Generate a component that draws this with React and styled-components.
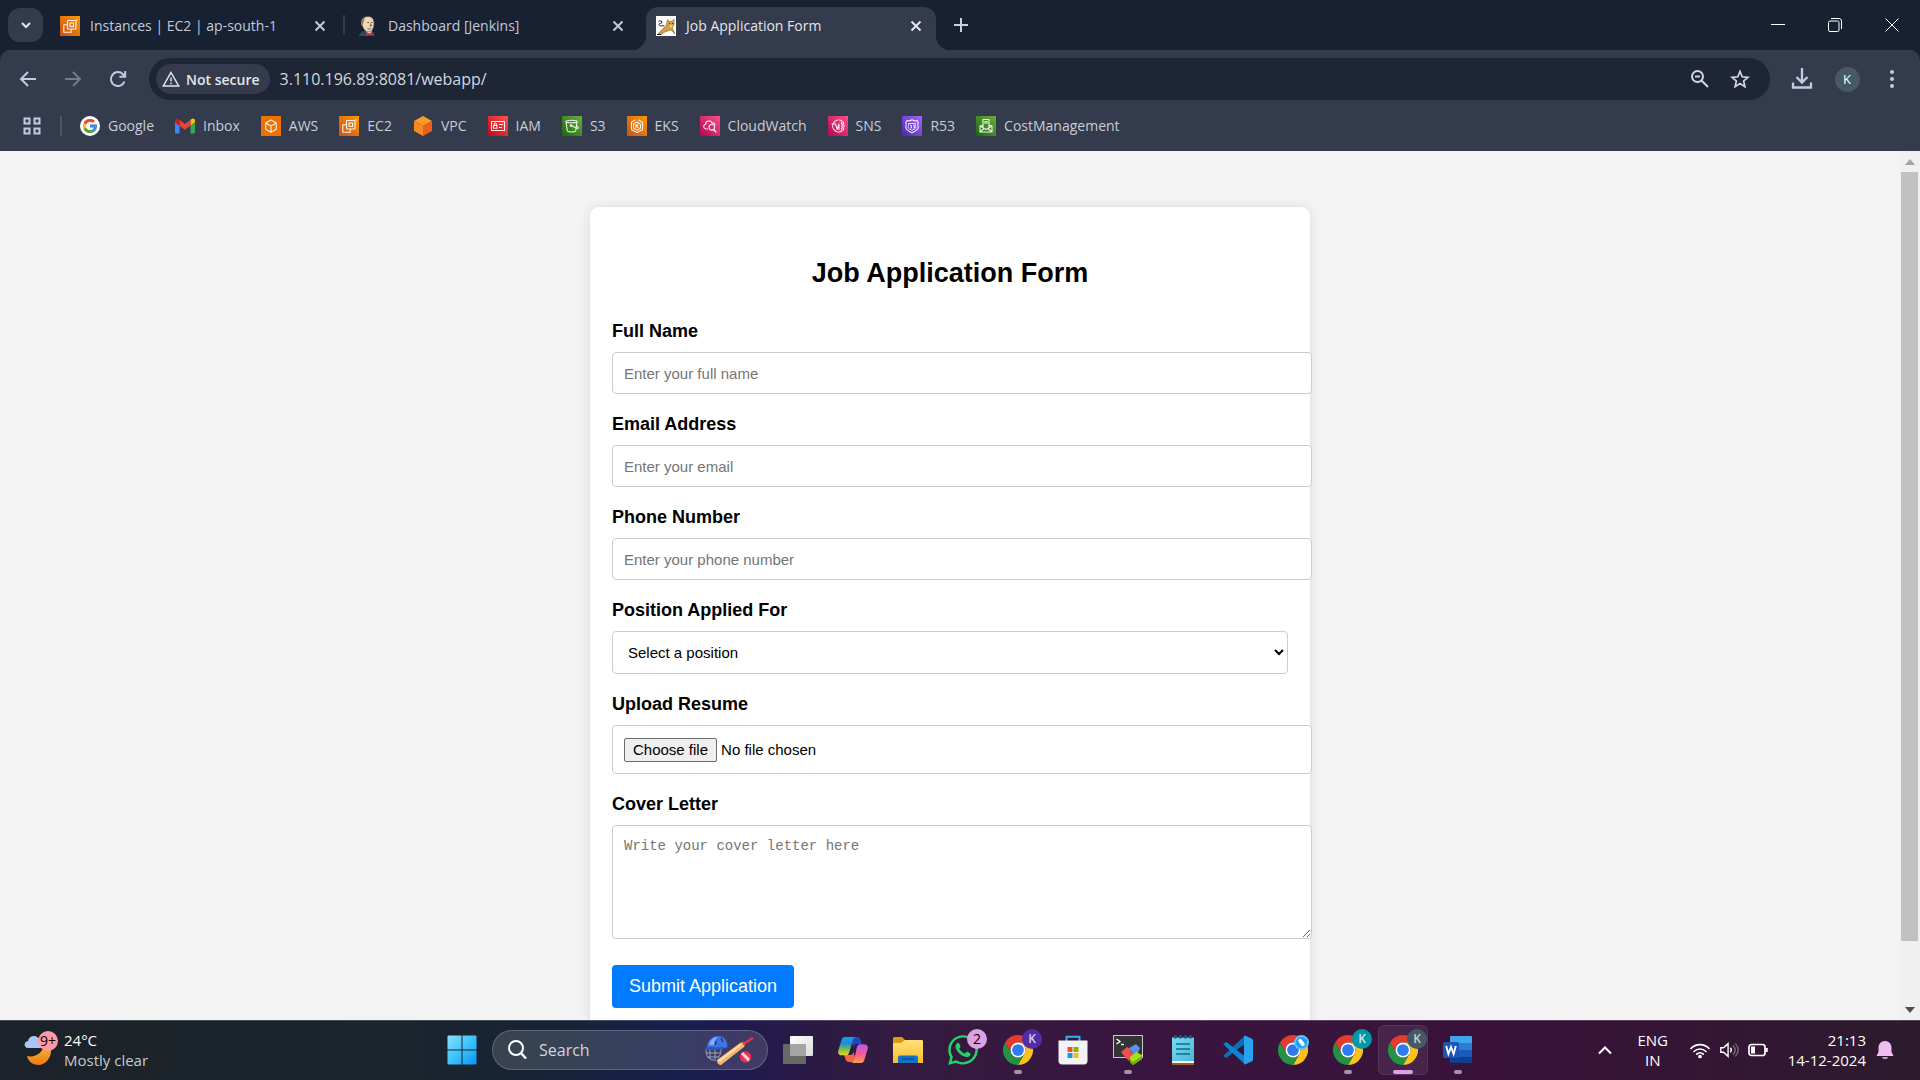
import React from "react";
import styled, { createGlobalStyle } from "styled-components";
import { FaWhatsapp } from "react-icons/fa";

const ui = `"Open Sans", "Noto Sans", sans-serif`;
const arial = `"Liberation Sans", Arial, sans-serif`;
const mono = `"Liberation Mono", monospace`;

const GlobalStyle = createGlobalStyle`
  html, body, #root { height: 100%; }
  body { margin: 0; overflow: hidden; font-family: ${ui}; }
  *, *::before, *::after { box-sizing: border-box; }
  svg { display: block; flex: none; }
`;

const Desktop = styled.div`
  height: 100vh;
  display: flex;
  flex-direction: column;
  background: #333b4c;
`;

const PlainButton = styled.button`
  display: flex;
  align-items: center;
  justify-content: center;
  flex: none;
  padding: 0;
  border: 0;
  background: none;
  color: inherit;
  font: inherit;
`;

/* ---------- tab strip ---------- */

const TabStrip = styled.header`
  display: flex;
  align-items: stretch;
  height: 50px;
  flex: none;
  background: #182131;
  color: #c9d0e4;
`;

const TabSearch = styled(PlainButton)`
  width: 35px;
  height: 34px;
  margin: 8px 7px 0 8px;
  border-radius: 12px;
  background: #333b4c;
  color: #e3e6ee;
`;

const Tabs = styled.nav`
  display: flex;
  padding-top: 7px;
`;

const Tab = styled.div`
  position: relative;
  display: flex;
  align-items: center;
  gap: 10px;
  width: 290px;
  padding: 0 8px 6px 10px;
  border-radius: 12px 12px 0 0;
  background: ${(p) => (p.$active ? "#333b4c" : "transparent")};
  color: ${(p) => (p.$active ? "#e3e6ee" : "#c3c9db")};

  &::before,
  &::after {
    content: "";
    display: ${(p) => (p.$active ? "block" : "none")};
    position: absolute;
    bottom: 0;
    width: 14px;
    height: 14px;
  }
  &::before {
    right: 100%;
    background: radial-gradient(circle at 0 0, transparent 14px, #333b4c 14px);
  }
  &::after {
    left: 100%;
    background: radial-gradient(circle at 100% 0, transparent 14px, #333b4c 14px);
  }
`;

const TabLink = styled.a`
  flex: 1;
  color: inherit;
  text-decoration: none;
  white-space: nowrap;
  font-size: 14px;
  line-height: 20px;
`;

const TabClose = styled(PlainButton)`
  width: 24px;
  height: 24px;
`;

const TabGap = styled.span`
  display: flex;
  justify-content: center;
  width: 8px;
  padding-top: 8px;

  &::after {
    content: "";
    width: 2px;
    height: 20px;
    background: ${(p) => (p.$line ? "#333b4c" : "transparent")};
  }
`;

const NewTab = styled(PlainButton)`
  width: 34px;
  height: 34px;
  margin: 8px auto 0 8px;
`;

const WindowButton = styled(PlainButton)`
  width: 57px;
  color: #ffffff;
`;

/* ---------- toolbar ---------- */

const Toolbar = styled.div`
  flex: none;
  background: #333b4c;
  border-radius: 10px 10px 0 0;
  color: #c3cbe2;
`;

const ToolbarBase = styled.div`
  flex: none;
  background: #182131;
`;

const AddressRow = styled.div`
  display: flex;
  align-items: center;
  padding: 8px 15px 8px 14px;
`;

const NavButton = styled(PlainButton)`
  width: 27px;
  height: 34px;
  margin-right: 18px;
  color: ${(p) => (p.$dim ? "#747b8b" : "#c3cbe2")};
`;

const Omnibox = styled.div`
  display: flex;
  align-items: center;
  flex: 1;
  height: 42px;
  padding: 0 18px 0 7px;
  border-radius: 21px;
  background: #1e2636;
  color: #d3d6df;
`;

const SecureChip = styled(PlainButton)`
  gap: 6px;
  height: 30px;
  padding: 0 10px 0 6px;
  margin-right: 10px;
  border-radius: 15px;
  background: #333b4c;
  color: #e3e5ea;
  font-size: 14px;
  font-weight: 600;
`;

const AddressInput = styled.input`
  flex: 1;
  height: 30px;
  padding: 0;
  border: 0;
  outline: 0;
  background: none;
  color: #d3d6df;
  font-family: ${ui};
  font-size: 16px;
`;

const BoxButton = styled(PlainButton)`
  width: 24px;
  height: 24px;
  margin-left: 16px;
`;

const ToolButton = styled(PlainButton)`
  width: 26px;
  height: 26px;
  margin-left: 19px;
`;

const Avatar = styled.span`
  display: flex;
  align-items: center;
  justify-content: center;
  width: 25px;
  height: 25px;
  border-radius: 50%;
  background: #455a64;
  color: #ffffff;
  font-size: 13px;
  line-height: 20px;
`;

const BookmarkBar = styled.nav`
  display: flex;
  align-items: center;
  height: 43px;
  padding: 0 20px 8px 22px;
  gap: 21px;
`;

const AppsGap = styled.span`
  width: 2px;
  height: 20px;
  margin: 0 -3px;
  background: #4d5667;
`;

const Bookmark = styled.a`
  display: flex;
  align-items: center;
  gap: 8px;
  color: #c9cdd8;
  font-size: 14px;
  line-height: 20px;
  text-decoration: none;
  white-space: nowrap;
`;

/* ---------- page ---------- */

const Viewport = styled.div`
  display: flex;
  flex: 1;
  min-height: 0;
  overflow: hidden;
  background: #f3f3f3;
`;

const Page = styled.main`
  flex: 1;
  min-width: 0;
  padding: 56px 20px 0;
  overflow: hidden;
  color: #000000;
  font-family: ${arial};
`;

const Card = styled.form`
  max-width: 720px;
  margin: 0 auto;
  padding: 22px;
  border-radius: 9px;
  background: #ffffff;
  box-shadow: 0 0 11px rgba(0, 0, 0, 0.1);
`;

const Title = styled.h2`
  margin: 28px 0 32px;
  font-size: 27px;
  line-height: 32px;
  text-align: center;
`;

const Field = styled.div`
  margin-bottom: 20px;
`;

const FieldLabel = styled.label`
  display: block;
  margin-bottom: 10px;
  font-size: 18px;
  font-weight: bold;
  line-height: 21px;
`;

const controlLook = `
  display: block;
  border: 1px solid #cccccc;
  border-radius: 4px;
  background: #ffffff;
  font-family: ${arial};
  font-size: 15px;
`;

const TextInput = styled.input`
  ${controlLook}
  box-sizing: content-box;
  width: 100%;
  height: 18px;
  padding: 11px;
  &::placeholder { color: #757575; }
`;

const SelectInput = styled.select`
  ${controlLook}
  width: 100%;
  height: 43px;
  padding: 11px;
  color: #000000;
`;

const FileBox = styled.div`
  ${controlLook}
  box-sizing: content-box;
  display: flex;
  align-items: center;
  gap: 4px;
  width: 100%;
  height: 25px;
  padding: 11px;
`;

const HiddenFile = styled.input`
  position: absolute;
  width: 1px;
  height: 1px;
  opacity: 0;
`;

const ChooseFile = styled.label`
  padding: 2px 8px;
  border: 1px solid #6b6b6b;
  border-radius: 2px;
  background: #efefef;
  line-height: 18px;
`;

const LetterInput = styled.textarea`
  ${controlLook}
  box-sizing: content-box;
  width: 100%;
  height: 90px;
  padding: 11px;
  font-family: ${mono};
  font-size: 14px;
  line-height: 19px;
  resize: both;
  &::placeholder { color: #757575; }
`;

const Submit = styled.button`
  display: block;
  height: 43px;
  margin-top: 26px;
  padding: 0 17px;
  border: 0;
  border-radius: 4px;
  background: #007bff;
  color: #ffffff;
  font-family: ${arial};
  font-size: 18px;
`;

const Scrollbar = styled.div`
  display: flex;
  flex-direction: column;
  flex: none;
  width: 20px;
  background: #f0f0f0;
`;

const ScrollArrow = styled(PlainButton)`
  height: 21px;
  color: ${(p) => (p.$dim ? "#a3a3a3" : "#505050")};
`;

const ScrollTrack = styled.div`
  flex: 1;
  padding: 0 2px 0 1px;
`;

const ScrollThumb = styled.div`
  height: 93%;
  background: #c1c1c1;
`;

/* ---------- taskbar ---------- */

const Taskbar = styled.footer`
  display: grid;
  grid-template-columns: 1fr auto 1fr;
  flex: none;
  height: 60px;
  padding-bottom: 2px;
  border-top: 1px solid rgba(255, 255, 255, 0.2);
  background: linear-gradient(
    90deg, #1b2229 0%, #1b252b 20%, #172338 29%, #17204b 35%, #1e1a4f 38%,
    #2a1a45 42%, #341b40 47%, #39153f 60%, #38123a 78%, #341634 90%, #2b1b2c 100%
  );
  background-origin: border-box;
  color: #ffffff;
`;

const Weather = styled(PlainButton)`
  justify-self: start;
  gap: 6px;
  padding-left: 22px;
`;

const WeatherIcon = styled.span`
  position: relative;
  width: 36px;
  height: 40px;
`;

const Stack = styled.span`
  display: flex;
  flex-direction: column;
  text-align: ${(p) => p.$align || "left"};
  font-size: 15px;
  line-height: 20px;
`;

const Muted = styled.span`
  color: #c8cacc;
`;

const Badge = styled.span`
  position: absolute;
  top: ${(p) => p.$top || "3px"};
  right: ${(p) => p.$right || "0"};
  display: flex;
  align-items: center;
  justify-content: center;
  width: ${(p) => p.$size || "20px"};
  height: ${(p) => p.$size || "20px"};
  border-radius: 50%;
  background: ${(p) => p.$bg};
  color: ${(p) => p.$fg || "#000000"};
  font-size: ${(p) => (p.$fg ? "12px" : "14px")};
  font-weight: ${(p) => (p.$fg ? 600 : 400)};
  line-height: 20px;
`;

const Apps = styled.nav`
  display: flex;
  align-items: center;
  gap: 5px;
`;

const AppButton = styled(PlainButton)`
  position: relative;
  width: 50px;
  height: 50px;
  border-radius: 6px;
  border: 1px solid ${(p) => (p.$active ? "rgba(255,255,255,0.08)" : "transparent")};
  background: ${(p) => (p.$active ? "rgba(255,255,255,0.08)" : "none")};

  &::after {
    content: "";
    position: absolute;
    bottom: 0;
    width: ${(p) => (p.$active ? "20px" : "8px")};
    height: 4px;
    border-radius: 2px;
    background: ${(p) => (p.$active ? "#dd9fe6" : p.$running ? "#a494a8" : "transparent")};
  }
`;

const SearchBox = styled.label`
  display: flex;
  align-items: center;
  width: 276px;
  height: 40px;
  padding: 0 13px 0 15px;
  gap: 12px;
  border: 1px solid rgba(255, 255, 255, 0.2);
  border-radius: 20px;
  background: rgba(255, 255, 255, 0.14);
`;

const SearchInput = styled.input`
  flex: 1;
  min-width: 0;
  padding: 0;
  border: 0;
  outline: 0;
  background: none;
  font-family: ${ui};
  font-size: 16px;
  color: #ffffff;
  &::placeholder { color: #d3d5db; opacity: 1; }
`;

const Tray = styled.div`
  display: flex;
  align-items: center;
  justify-content: flex-end;
  padding-right: 26px;
`;

const TrayChevron = styled(PlainButton)`
  width: 24px;
  margin-right: 20px;
`;

const Language = styled(PlainButton)`
  width: 32px;
  margin-right: 21px;
`;

const Status = styled(PlainButton)`
  gap: 9px;
  margin-right: 20px;
`;

const Clock = styled(PlainButton)`
  margin-right: 10px;
`;

/* ---------- drawings ---------- */

const Line = ({ size = 20, box = 20, w = 2, children, ...rest }) => (
  <svg width={size} height={size} viewBox={`0 0 ${box} ${box}`} fill="none" stroke="currentColor" strokeWidth={w} {...rest}>
    {children}
  </svg>
);

const CloseIcon = () => (
  <Line size={12} box={12}><path d="M1.5 1.5l9 9M10.5 1.5l-9 9" /></Line>
);

const tiles = {
  orange: ["#c8511b", "#ff9900"],
  flat: ["#ed7100", "#ed7100"],
  red: ["#bd0816", "#ff5252"],
  green: ["#1b660f", "#6cae3e"],
  pink: ["#b0084d", "#ff4f8b"],
  purple: ["#4d27a8", "#a166ff"],
};

const Tile = ({ tone, children }) => {
  const id = React.useId();
  return (
    <svg width="20" height="20" viewBox="0 0 20 20">
      <linearGradient id={id} x1="0" y1="1" x2="1" y2="0">
        <stop offset="0" stopColor={tiles[tone][0]} />
        <stop offset="1" stopColor={tiles[tone][1]} />
      </linearGradient>
      <rect width="20" height="20" fill={`url(#${id})`} />
      <g fill="none" stroke="#ffffff" strokeOpacity="0.9" strokeWidth="1.1" strokeLinejoin="round">{children}</g>
    </svg>
  );
};

const Ec2Icon = () => (
  <Tile tone="orange">
    <rect x="7.500" y="4.500" width="8.500" height="8.500" rx="0.800" />
    <rect x="10" y="7" width="3.500" height="3.500" />
    <path d="M7.500 8.800H3.800v7.400h7.400V13" />
    <path d="M17 3v2" strokeWidth="0.800" />
  </Tile>
);
const AwsIcon = () => (
  <Tile tone="flat"><path d="M10 4l5.200 3v6.200L10 16.200l-5.200-3V7zM4.800 7l5.200 3 5.200-3M10 10v6.200" /></Tile>
);
const VpcIcon = () => (
  <svg width="20" height="20" viewBox="0 0 20 20">
    <path d="M10 0l9 5-9 5-9-5z" fill="#fd9c28" />
    <path d="M1 5l9 5v10l-9-5z" fill="#f68a1f" />
    <path d="M19 5l-9 5v10l9-5z" fill="#e8601c" />
  </svg>
);
const IamIcon = () => (
  <Tile tone="red">
    <path d="M3.500 5.500h13v9h-13zM11 8.500h4M11 11.500h3" />
    <rect x="5.500" y="9.500" width="3.500" height="2.800" /><path d="M6.200 9.500V8a1 1 0 0 1 2.100 0v1.500" />
  </Tile>
);
const S3Icon = () => (
  <Tile tone="green">
    <ellipse cx="9.500" cy="5.500" rx="5.500" ry="1.300" />
    <path d="M4 5.500l1.300 9.500c1 1.400 7.400 1.400 8.400 0L15 5.500M9 9.500l6.500 3c1.500 0 1-1.500-1-2.500" /><circle cx="9" cy="9.500" r="0.700" />
  </Tile>
);
const EksIcon = () => (
  <Tile tone="orange">
    <path d="M8.500 3.800L4.500 6.200v7.600L10 16.500l5.500-2.700V6.200l-4-2.400" />
    <path d="M10 6l3.400 2v4.200L10 14l-3.400-1.800V8zM9 8v4M9 10.500l2.300-2M9.700 10l1.800 2" />
  </Tile>
);
const CloudWatchIcon = () => (
  <Tile tone="pink">
    <path d="M8 13H6c-3-.5-3-4-.5-4.500C5.500 4.500 11 3.500 12 7c2-.5 3 1 3 2.200" />
    <circle cx="11.800" cy="11.300" r="2.800" /><path d="M13.600 13.500l2.600 2.800" strokeWidth="1.500" />
  </Tile>
);
const SnsIcon = () => (
  <Tile tone="pink">
    <path d="M14 5a6 6 0 1 0 0 10M3.500 8h4l1.700 5.500L11 8v6" />
    <circle cx="14.500" cy="7" r="1.200" /><circle cx="15" cy="10" r="1.200" /><circle cx="14.500" cy="13" r="1.200" />
  </Tile>
);
const R53Icon = () => (
  <Tile tone="purple">
    <path d="M5 4.500c1.500.8 3 .5 5-.7 2 1.200 3.500 1.500 5 .7l1.200 2c-1 2-.4 3 .1 4.600 0 3-3.300 4-6.300 5.700-3-1.700-6.300-2.700-6.300-5.700.5-1.600 1.100-2.600.1-4.600z" />
    <path d="M6.500 7.500h7c-.5 2 .3 2.500.3 3.800 0 1.600-2.200 2-3.800 3-1.600-1-3.800-1.400-3.800-3 0-1.300.8-1.800.3-3.800zM8 9.500h1.500V12H8M11 9.500h1.500V12H11" strokeWidth="0.900" />
  </Tile>
);
const CostIcon = () => (
  <Tile tone="green">
    <path d="M7 11V3.500h6V11M9 8V5.500h2V8M4.500 9.500H7M13 9.500h2.500M4 10l6 3.500 6-3.500v6H4zM4 16l4-3.500M16 16l-4-3.500" />
  </Tile>
);
const GoogleIcon = () => (
  <svg width="20" height="20" viewBox="0 0 48 48">
    <circle cx="24" cy="24" r="24" fill="#ffffff" />
    <g transform="translate(3.600 3.600) scale(0.850)">
      <path fill="#fbbc05" d="M43.611 20.083H42V20H24v8h11.303c-1.649 4.657-6.080 8-11.303 8-6.627 0-12-5.373-12-12s5.373-12 12-12c3.059 0 5.842 1.154 7.961 3.039l5.657-5.657C34.046 6.053 29.268 4 24 4 12.955 4 4 12.955 4 24s8.955 20 20 20 20-8.955 20-20c0-1.341-.138-2.650-.389-3.917z" />
      <path fill="#ea4335" d="M6.306 14.691l6.571 4.819C14.655 15.108 18.961 12 24 12c3.059 0 5.842 1.154 7.961 3.039l5.657-5.657C34.046 6.053 29.268 4 24 4 16.318 4 9.656 8.337 6.306 14.691z" />
      <path fill="#34a853" d="M24 44c5.166 0 9.860-1.977 13.409-5.192l-6.190-5.238C29.211 35.091 26.715 36 24 36c-5.202 0-9.619-3.317-11.283-7.946l-6.522 5.025C9.505 39.556 16.227 44 24 44z" />
      <path fill="#4285f4" d="M43.611 20.083H42V20H24v8h11.303c-.792 2.237-2.231 4.166-4.087 5.571l6.193 5.237C36.971 39.205 44 34 44 24c0-1.341-.138-2.650-.389-3.917z" />
    </g>
  </svg>
);
const GmailIcon = () => (
  <svg width="20" height="20" viewBox="52 31 88 88">
    <path fill="#4285f4" d="M58 108h14V74L52 59v43c0 3.320 2.690 6 6 6" />
    <path fill="#34a853" d="M120 108h14c3.320 0 6-2.690 6-6V59l-20 15" />
    <path fill="#fbbc04" d="M120 48v26l20-15v-8c0-7.420-8.470-11.650-14.400-7.200" />
    <path fill="#ea4335" d="M72 74V48l24 18 24-18v26L96 92" />
    <path fill="#c5221f" d="M52 51v8l20 15V48l-5.600-4.200c-5.940-4.450-14.400-.22-14.400 7.200" />
  </svg>
);
const JenkinsIcon = () => (
  <svg width="20" height="20" viewBox="0 0 20 20">
    <path d="M1 20c.5-3 2.500-4.500 5-5l6-.5c3 .5 4.500 2.500 5 5.500z" fill="#2f4a5c" />
    <path d="M7 14l4 5 3-4-1-2z" fill="#f4f4f4" />
    <path d="M4 8C3.500 3 6.200.5 10 .5s6.200 2.600 6 7.200c-.1 4.500-2 8.100-5 8.100C7.200 15.800 4.500 12.500 4 8z" fill="#f0d6b7" stroke="#4b4038" strokeWidth="0.600" />
    <path d="M3.500 10C2 5 4 1 8 .8 5.600 3 6.600 5.500 5.300 7z" fill="#8d7f70" />
    <path d="M9.300 6.500h1.700M13 6.500h1.500M9.500 12.500c1.500.8 2.500.7 3.500 0M12.500 7.500l.8 2.500h-1.500" fill="none" stroke="#3b312b" strokeWidth="0.800" />
    <path d="M8.500 16l3 1.300 3-1.300v4l-3-1.300-3 1.300z" fill="#d33833" />
  </svg>
);
const TomcatIcon = () => (
  <svg width="20" height="20" viewBox="0 0 20 20">
    <rect width="20" height="20" fill="#ffffff" />
    <path d="M11.500 3.500l1.800 1.800h3L18 3.200l.2 5.300-2 3 2.800 6.500-4-4-5 1.500-4.500 2.500H2l3-3.500 5-4.500z" fill="#d7a041" stroke="#6b5426" strokeWidth="0.500" />
    <path d="M13 7.500l1.500.8M17 7.200l-1.300 1M14 10.500h2.500M1 18.500h4M8.500 10C6 9.500 3 10.500 3 8.500s3.500-.5 3-2.500-3-1-3.500-.5" fill="none" stroke="#222" strokeWidth="1" />
    <path d="M13.200 8.500h3.600l-.6 3h-2z" fill="#f2d36b" />
  </svg>
);
const ChromeIcon = () => (
  <svg width="30" height="30" viewBox="0 0 48 48">
    <path fill="#e33b2e" d="M3.215 12A24 24 0 0 1 44.785 12H24A12 12 0 0 0 13.608 30z" />
    <path fill="#fcc21b" d="M44.785 12A24 24 0 0 1 24 48l10.392-18A12 12 0 0 0 24 12z" />
    <path fill="#229342" d="M24 48A24 24 0 0 1 3.215 12l10.393 18a12 12 0 0 0 20.784 0z" />
    <circle cx="24" cy="24" r="12" fill="#ffffff" />
    <circle cx="24" cy="24" r="9.400" fill="#2f7bee" />
  </svg>
);
const WindowsIcon = () => (
  <svg width="30" height="30" viewBox="0 0 30 30">
    <linearGradient id="win" x1="0" y1="0" x2="1" y2="1" >
      <stop offset="0" stopColor="#8be0ff" /><stop offset="0.500" stopColor="#3cc3fb" /><stop offset="1" stopColor="#0a93f7" />
    </linearGradient>
    <path fill="url(#win)" d="M1.500.500h13v14h-14v-13a1 1 0 0 1 1-1zM15.500.500h13a1 1 0 0 1 1 1v13h-14zM.500 15.500h14v14h-13a1 1 0 0 1-1-1zM15.500 15.500h14v13a1 1 0 0 1-1 1h-13z" />
  </svg>
);
const CricketIcon = () => (
  <svg width="50" height="30" viewBox="0 0 50 30">
    <g fill="none" stroke="#9aa3b8" strokeWidth="1"><path d="M2 15c0 6 3 10 8 10M6 14v10M11 14v12M2 18h14M3 22h12M17 14c0 4-1 7-3 9" /></g>
    <path d="M3 12C4 5 8 1 14 1c6 0 9.500 4 9.500 11l-6 2-15 0z" fill="#3f74e6" />
    <path d="M5 10C6 5 9 2 14 2c-3 2-4 5-4 8z" fill="#86acf8" />
    <path d="M0 15l3-3 17 0-2 2.500z" fill="#2b58c8" />
    <path d="M12 6l-.5 4M17 3l2 4" stroke="#1c2f6b" strokeWidth="1.300" />
    <path d="M13 25L36 8c2-1 3-1 4 0s1 2 0 4L17 30c-2 .5-5-3-4-5z" fill="#f5b467" />
    <path d="M14 25L36 9l1.500 1.500L16 27z" fill="#ffd9a0" />
    <path d="M40 8.500l8-5" stroke="#e0344f" strokeWidth="2.600" strokeLinecap="round" />
    <circle cx="41.500" cy="22" r="5.700" fill="#ea2f52" />
    <path d="M37 19l2-2 7 7-2 2.500z" fill="#ffd7de" />
  </svg>
);
const TaskViewIcon = () => (
  <svg width="30" height="30" viewBox="0 0 30 30">
    <linearGradient id="tv" x2="1" y2="1"><stop stopColor="#ffffff" /><stop offset="1" stopColor="#dcdcdc" /></linearGradient>
    <rect x="7" y="1" width="23" height="20" rx="1" fill="url(#tv)" />
    <rect x="0" y="9" width="23" height="20" rx="1" fill="#686868" />
    <path d="M7 9h16v12H7z" fill="#a4a4a4" />
  </svg>
);
const CopilotIcon = () => (
  <svg width="30" height="30" viewBox="0 0 30 30">
    <linearGradient id="cpa" x2="0" y2="1"><stop stopColor="#13a4f0" /><stop offset="0.350" stopColor="#2389d8" /><stop offset="0.650" stopColor="#6cbf4a" /><stop offset="1" stopColor="#f4d126" /></linearGradient>
    <linearGradient id="cpb" x2="0" y2="1"><stop stopColor="#b45be8" /><stop offset="0.500" stopColor="#f3589a" /><stop offset="1" stopColor="#ff9a4d" /></linearGradient>
    <path d="M12 2h7c2 0 3 1 3.600 3L24 9h-5c-2 0-3 1-3.500 3z" fill="#1c49c2" />
    <path d="M18 27h-7c-2 0-3-1-3.600-3L6 20h6c2 0 3-1 3.500-3z" fill="#f2683c" />
    <path d="M7 2h11c-2 .4-2.600 1.500-3 3l-4 13c-.6 1.500-1.500 2.300-3 2.300H4c-3 0-4.500-2-3.600-5l3-10C4.200 3 5 2 7 2z" fill="url(#cpa)" />
    <path d="M23 28H13c2-.4 2.600-1.500 3-3l3-13c.6-1.800 1.500-2.700 3-2.700h4c3 0 4.500 2 3.600 5l-3 10c-.8 2.700-1.600 3.700-3.600 3.700z" fill="url(#cpb)" />
  </svg>
);
const FolderIcon = () => (
  <svg width="30" height="30" viewBox="0 0 30 30">
    <linearGradient id="fd" x2="0" y2="1"><stop stopColor="#ffe07a" /><stop offset="1" stopColor="#f8bd2a" /></linearGradient>
    <path d="M0 3.500C0 2.500.600 2 1.500 2H9l3 3v5H0z" fill="#dc9a10" />
    <path d="M0 8h8l4-3h16.500c1 0 1.500.500 1.500 1.500V28H0z" fill="url(#fd)" />
    <path d="M5 28v-5c0-2 1-2.500 2.500-2.500h15c1.500 0 2.500.500 2.500 2.500v5z" fill="#1273c4" />
    <path d="M9 24h12" stroke="#0b4f93" strokeWidth="1.500" />
  </svg>
);
const StoreIcon = () => (
  <svg width="30" height="30" viewBox="0 0 30 30">
    <path d="M8.500 7V1.800h13V7" fill="none" stroke="#2bb8ee" strokeWidth="2" />
    <path d="M.500 5.500h29V26c0 2-1.500 3.500-3.500 3.500H4C2 29.500.500 28 .500 26z" fill="#f3f3f5" />
    <path fill="#f25022" d="M9.500 12h5v5h-5z" /><path fill="#7fba00" d="M15.500 12h5v5h-5z" />
    <path fill="#00a4ef" d="M9.500 18h5v5h-5z" /><path fill="#ffb900" d="M15.500 18h5v5h-5z" />
  </svg>
);
const TerminalIcon = () => (
  <svg width="30" height="30" viewBox="0 0 30 30">
    <rect x="0.500" y="0.500" width="29" height="22" fill="#343434" stroke="#c9c9c9" />
    <path d="M3.500 4l3.500 2.500L3.500 9M8 9.500h3" fill="none" stroke="#fff" strokeWidth="1.300" />
    <path d="M8 17l6-5 3 2 1 3 3 3-5 6-3-3z" fill="#ef4f4a" />
    <path d="M16 13l7-4 4 4-2 5-5 1z" fill="#5a90f0" />
    <path d="M17 22l6-5 6 3v4l-9 6-3-3z" fill="#a4e012" /><path d="M17 24l3 3 9-6v3l-9 6-3-3z" fill="#6fae0a" />
  </svg>
);
const NotepadIcon = () => (
  <svg width="30" height="30" viewBox="0 0 30 30">
    <path d="M4 26h22v4H4z" fill="#a9571c" /><path d="M4 4h22v24H4z" fill="#e8f5fa" />
    <linearGradient id="np" x2="1" y2="1"><stop stopColor="#7bdcf0" /><stop offset="1" stopColor="#4bb6d6" /></linearGradient>
    <path d="M4 2.500h22V26H4z" fill="url(#np)" />
    <path d="M8 9h14M8 14h14M8 19h14" stroke="#0f6c8c" strokeWidth="1.700" />
    <path d="M7.500 1v1.500M12.500 1v1.500M17.500 1v1.500M22.500 1v1.500" stroke="#0f5f80" strokeWidth="2.600" strokeLinecap="round" />
  </svg>
);
const CodeIcon = () => (
  <svg width="30" height="30" viewBox="0 0 30 30">
    <path d="M.500 20.500L22 .500v8L4 22.500c-.5.400-1 .400-1.500 0l-2-1.500z" fill="#0a70b8" />
    <path d="M.500 9.500L22 29.500v-8L4 7.500c-.5-.4-1-.4-1.500 0l-2 1.500z" fill="#0e85d2" />
    <path d="M22 .500l6.500 3c.9.500 1.500 1 1.500 2v19c0 1-.6 1.500-1.500 2l-6.500 3c-.8-.3-1-.8-1-1.500V2c0-.7.200-1.200 1-1.500z" fill="#27a3f0" />
  </svg>
);
const WordIcon = () => (
  <svg width="30" height="30" viewBox="0 0 30 30">
    <path d="M7 2a1 1 0 0 1 1-1h20a1 1 0 0 1 1 1v6H7z" fill="#41a5ee" /><path d="M7 8h22v7H7z" fill="#2b7cd3" />
    <path d="M7 15h22v7H7z" fill="#185abd" /><path d="M7 22h22v5a1 1 0 0 1-1 1H8a1 1 0 0 1-1-1z" fill="#103f91" />
    <rect x="0" y="7" width="16" height="16" rx="1.500" fill="#1a56b5" />
    <path d="M3.200 11l2.200 8L8 12l2.600 7 2.200-8" fill="none" stroke="#fff" strokeWidth="1.900" />
  </svg>
);

const tabs = [
  { title: "Instances | EC2 | ap-south-1", icon: <Ec2Icon />, line: true },
  { title: "Dashboard [Jenkins]", icon: <JenkinsIcon /> },
  { title: "Job Application Form", icon: <TomcatIcon />, active: true },
];

const bookmarks = [
  ["Google", <GoogleIcon />], ["Inbox", <GmailIcon />], ["AWS", <AwsIcon />], ["EC2", <Ec2Icon />],
  ["VPC", <VpcIcon />], ["IAM", <IamIcon />], ["S3", <S3Icon />], ["EKS", <EksIcon />],
  ["CloudWatch", <CloudWatchIcon />], ["SNS", <SnsIcon />], ["R53", <R53Icon />], ["CostManagement", <CostIcon />],
];

const apps = [
  { name: "Task view", icon: <TaskViewIcon /> },
  { name: "Copilot", icon: <CopilotIcon /> },
  { name: "File Explorer", icon: <FolderIcon /> },
  { name: "WhatsApp", icon: <FaWhatsapp size={34} color="#25d366" />, badge: "2", bg: "#dca0e6" },
  { name: "Chrome personal", icon: <ChromeIcon />, badge: "K", bg: "#512da8", fg: "#d9cdf2", running: true },
  { name: "Store", icon: <StoreIcon /> },
  { name: "Terminal", icon: <TerminalIcon />, running: true },
  { name: "Notepad", icon: <NotepadIcon /> },
  { name: "Code", icon: <CodeIcon /> },
  { name: "Chrome", icon: <ChromeIcon />, dot: true },
  { name: "Chrome work", icon: <ChromeIcon />, badge: "K", bg: "#0097a7", fg: "#c9eef2", running: true },
  { name: "Chrome current", icon: <ChromeIcon />, badge: "K", bg: "#455a64", fg: "#c9d2d6", active: true },
  { name: "Word", icon: <WordIcon />, running: true },
];

function Browser() {
  return (
    <>
      <TabStrip>
        <TabSearch aria-label="Search tabs">
          <Line size={12} box={12}><path d="M2 4l4 4 4-4" /></Line>
        </TabSearch>
        <Tabs>
          {tabs.map((t, i) => (
            <React.Fragment key={t.title}>
              {i > 0 && <TabGap $line={tabs[i - 1].line} />}
              <Tab $active={t.active}>
                {t.icon}
                <TabLink href="#">{t.title}</TabLink>
                <TabClose aria-label={`Close ${t.title}`}><CloseIcon /></TabClose>
              </Tab>
            </React.Fragment>
          ))}
        </Tabs>
        <NewTab aria-label="New tab"><Line size={14} box={14}><path d="M7 0v14M0 7h14" /></Line></NewTab>
        <WindowButton aria-label="Minimise"><Line size={14} box={14} w={1}><path d="M0 6.500h14" /></Line></WindowButton>
        <WindowButton aria-label="Restore">
          <Line size={14} box={14} w={1}><rect x="0.500" y="3" width="10.500" height="10.500" rx="1.500" /><path d="M3 .500h8a2.500 2.500 0 0 1 2.500 2.500v8" /></Line>
        </WindowButton>
        <WindowButton aria-label="Close window"><Line size={14} box={14} w={1}><path d="M.500.500l13 13M13.500.500l-13 13" /></Line></WindowButton>
      </TabStrip>
      <ToolbarBase>
        <Toolbar>
          <AddressRow>
            <NavButton aria-label="Back"><Line size={18} box={18}><path d="M17 9H3M9 2L2 9l7 7" /></Line></NavButton>
            <NavButton aria-label="Forward" $dim><Line size={18} box={18}><path d="M1 9h14M9 2l7 7-7 7" /></Line></NavButton>
            <NavButton aria-label="Reload">
              <Line size={18} box={18}><path d="M15.500 11.500A7 7 0 1 1 14 4.200l2 2M16.200 1v5.800h-5.800" /></Line>
            </NavButton>
            <Omnibox>
              <SecureChip>
                <Line size={18} box={18} w={1.5}><path d="M9 2.500l7.700 13.500H1.300zM9 7.500v4M9 12.800v1.500" /></Line>
                Not secure
              </SecureChip>
              <AddressInput aria-label="Address" defaultValue="3.110.196.89:8081/webapp/" />
              <BoxButton aria-label="Zoom">
                <Line><circle cx="7.500" cy="7.500" r="5.500" /><path d="M5 7.500h5M11.500 11.500l6.500 6.500" /></Line>
              </BoxButton>
              <BoxButton aria-label="Bookmark this page">
                <Line w={1.7}><path d="M10 2.500l2.200 5.300 5.700.5-4.300 3.700 1.300 5.600-4.900-3-4.900 3 1.300-5.600L2.100 8.300l5.700-.5z" /></Line>
              </BoxButton>
            </Omnibox>
            <ToolButton aria-label="Downloads">
              <Line size={22} box={22} w={2.3}><path d="M11 0v14M5.500 9l5.500 5.500L16.500 9M2 14.500v5h18v-5" /></Line>
            </ToolButton>
            <ToolButton aria-label="Profile"><Avatar>K</Avatar></ToolButton>
            <ToolButton aria-label="Menu">
              <svg width="20" height="20" viewBox="0 0 20 20" fill="currentColor"><circle cx="10" cy="3" r="2" /><circle cx="10" cy="10" r="2" /><circle cx="10" cy="17" r="2" /></svg>
            </ToolButton>
          </AddressRow>
          <BookmarkBar>
            <PlainButton aria-label="Apps">
              <Line size={20} box={20}><path d="M2.500 2.500h5v5h-5zM12.500 2.500h5v5h-5zM2.500 12.500h5v5h-5zM12.500 12.500h5v5h-5z" /></Line>
            </PlainButton>
            <AppsGap />
            {bookmarks.map(([name, icon]) => (
              <Bookmark href="#" key={name}>{icon}{name}</Bookmark>
            ))}
          </BookmarkBar>
        </Toolbar>
      </ToolbarBase>
    </>
  );
}

function ApplicationPage() {
  return (
    <Viewport>
      <Page>
        <Card onSubmit={(e) => e.preventDefault()}>
          <Title>Job Application Form</Title>
          <Field>
            <FieldLabel htmlFor="name">Full Name</FieldLabel>
            <TextInput id="name" type="text" placeholder="Enter your full name" />
          </Field>
          <Field>
            <FieldLabel htmlFor="email">Email Address</FieldLabel>
            <TextInput id="email" type="email" placeholder="Enter your email" />
          </Field>
          <Field>
            <FieldLabel htmlFor="phone">Phone Number</FieldLabel>
            <TextInput id="phone" type="tel" placeholder="Enter your phone number" />
          </Field>
          <Field>
            <FieldLabel htmlFor="position">Position Applied For</FieldLabel>
            <SelectInput id="position"><option>Select a position</option></SelectInput>
          </Field>
          <Field>
            <FieldLabel htmlFor="resume">Upload Resume</FieldLabel>
            <FileBox>
              <HiddenFile id="resume" type="file" />
              <ChooseFile htmlFor="resume">Choose file</ChooseFile>
              <span>No file chosen</span>
            </FileBox>
          </Field>
          <Field>
            <FieldLabel htmlFor="letter">Cover Letter</FieldLabel>
            <LetterInput id="letter" placeholder="Write your cover letter here" />
          </Field>
          <Submit type="submit">Submit Application</Submit>
        </Card>
      </Page>
      <Scrollbar>
        <ScrollArrow $dim aria-label="Scroll up"><svg width="10" height="6" viewBox="0 0 10 6" fill="currentColor"><path d="M0 6l5-6 5 6z" /></svg></ScrollArrow>
        <ScrollTrack><ScrollThumb /></ScrollTrack>
        <ScrollArrow aria-label="Scroll down"><svg width="10" height="6" viewBox="0 0 10 6" fill="currentColor"><path d="M0 0l5 6 5-6z" /></svg></ScrollArrow>
      </Scrollbar>
    </Viewport>
  );
}

function SystemBar() {
  return (
    <Taskbar>
      <Weather>
        <WeatherIcon>
          <svg width="36" height="40" viewBox="0 0 36 40">
            <linearGradient id="moon" x2="0" y2="1"><stop stopColor="#f9b934" /><stop offset="1" stopColor="#ee7a16" /></linearGradient>
            <path d="M28 14c3 7 0 20-11 21-7 0-11-4-12-9 8 2 16-3 17-11z" fill="url(#moon)" />
            <path d="M6 18c-4 0-5-6 0-7 1-6 10-7 12 0h4v7z" fill="#a7c5f6" />
          </svg>
          <Badge $bg="#ff99a4" $top="1px">9+</Badge>
        </WeatherIcon>
        <Stack><span>24°C</span><Muted>Mostly clear</Muted></Stack>
      </Weather>
      <Apps>
        <AppButton aria-label="Start"><WindowsIcon /></AppButton>
        <SearchBox>
          <Line size={19} box={19}><circle cx="8" cy="8" r="7" /><path d="M13 13l5 5.500" strokeWidth="2.500" /></Line>
          <SearchInput type="search" aria-label="Search" placeholder="Search" />
          <CricketIcon />
        </SearchBox>
        {apps.map((a) => (
          <AppButton key={a.name} aria-label={a.name} $running={a.running} $active={a.active}>
            {a.icon}
            {a.badge && <Badge $bg={a.bg} $fg={a.fg}>{a.badge}</Badge>}
            {a.dot && (
              <Badge $bg="#5cc4f5" $top="9px" $right="8px" $size="15px">
                <svg width="11" height="11" viewBox="0 0 12 12"><circle cx="6" cy="6" r="6" fill="#1e9ff0" /><path d="M4.500 4l3 4" stroke="#fff" strokeWidth="4" strokeLinecap="round" /></svg>
              </Badge>
            )}
          </AppButton>
        ))}
      </Apps>
      <Tray>
        <TrayChevron aria-label="Show hidden icons"><Line size={14} box={14}><path d="M1 10.500l6-6 6 6" /></Line></TrayChevron>
        <Language><Stack $align="center"><span>ENG</span><span>IN</span></Stack></Language>
        <Status aria-label="Network, volume, battery">
          <Line size={20} box={20} w={1.7} strokeLinecap="round">
            <path d="M1 8.500a12.500 12.500 0 0 1 18 0M4 11.500a8.500 8.500 0 0 1 12 0M6.800 14.200a4.600 4.600 0 0 1 6.400 0" />
            <circle cx="10" cy="16.500" r="1" />
          </Line>
          <Line size={20} box={22} w={1.5}>
            <path d="M2 8.500h3l5-4.500v14l-5-4.500H2zM12.500 8.500c1.300 1.500 1.300 3.500 0 5" /><path d="M15.500 6c2.700 3 2.700 7 0 10M18 4c4 4.500 4 9.500 0 14" opacity="0.350" />
          </Line>
          <Line size={20} box={20} w={1.7}><rect x="1" y="4.500" width="16" height="11" rx="2.500" /><path d="M18.500 8v4" strokeWidth="2.500" /><path d="M3 6.500h4v7H3z" fill="currentColor" stroke="none" /></Line>
        </Status>
        <Clock><Stack $align="right"><span>21:13</span><span>14-12-2024</span></Stack></Clock>
        <PlainButton aria-label="Notifications">
          <svg width="18" height="20" viewBox="0 0 18 20" fill="#efbdf2"><path d="M9 1c4 0 6.500 3 6.500 6.500V12l2 4H.500l2-4V7.500C2.500 4 5 1 9 1z" /><path d="M6 17h6c-.5 3-5.500 3-6 0z" fill="#c493ca" /></svg>
        </PlainButton>
      </Tray>
    </Taskbar>
  );
}

export default function App() {
  return (
    <Desktop>
      <GlobalStyle />
      <Browser />
      <ApplicationPage />
      <SystemBar />
    </Desktop>
  );
}
